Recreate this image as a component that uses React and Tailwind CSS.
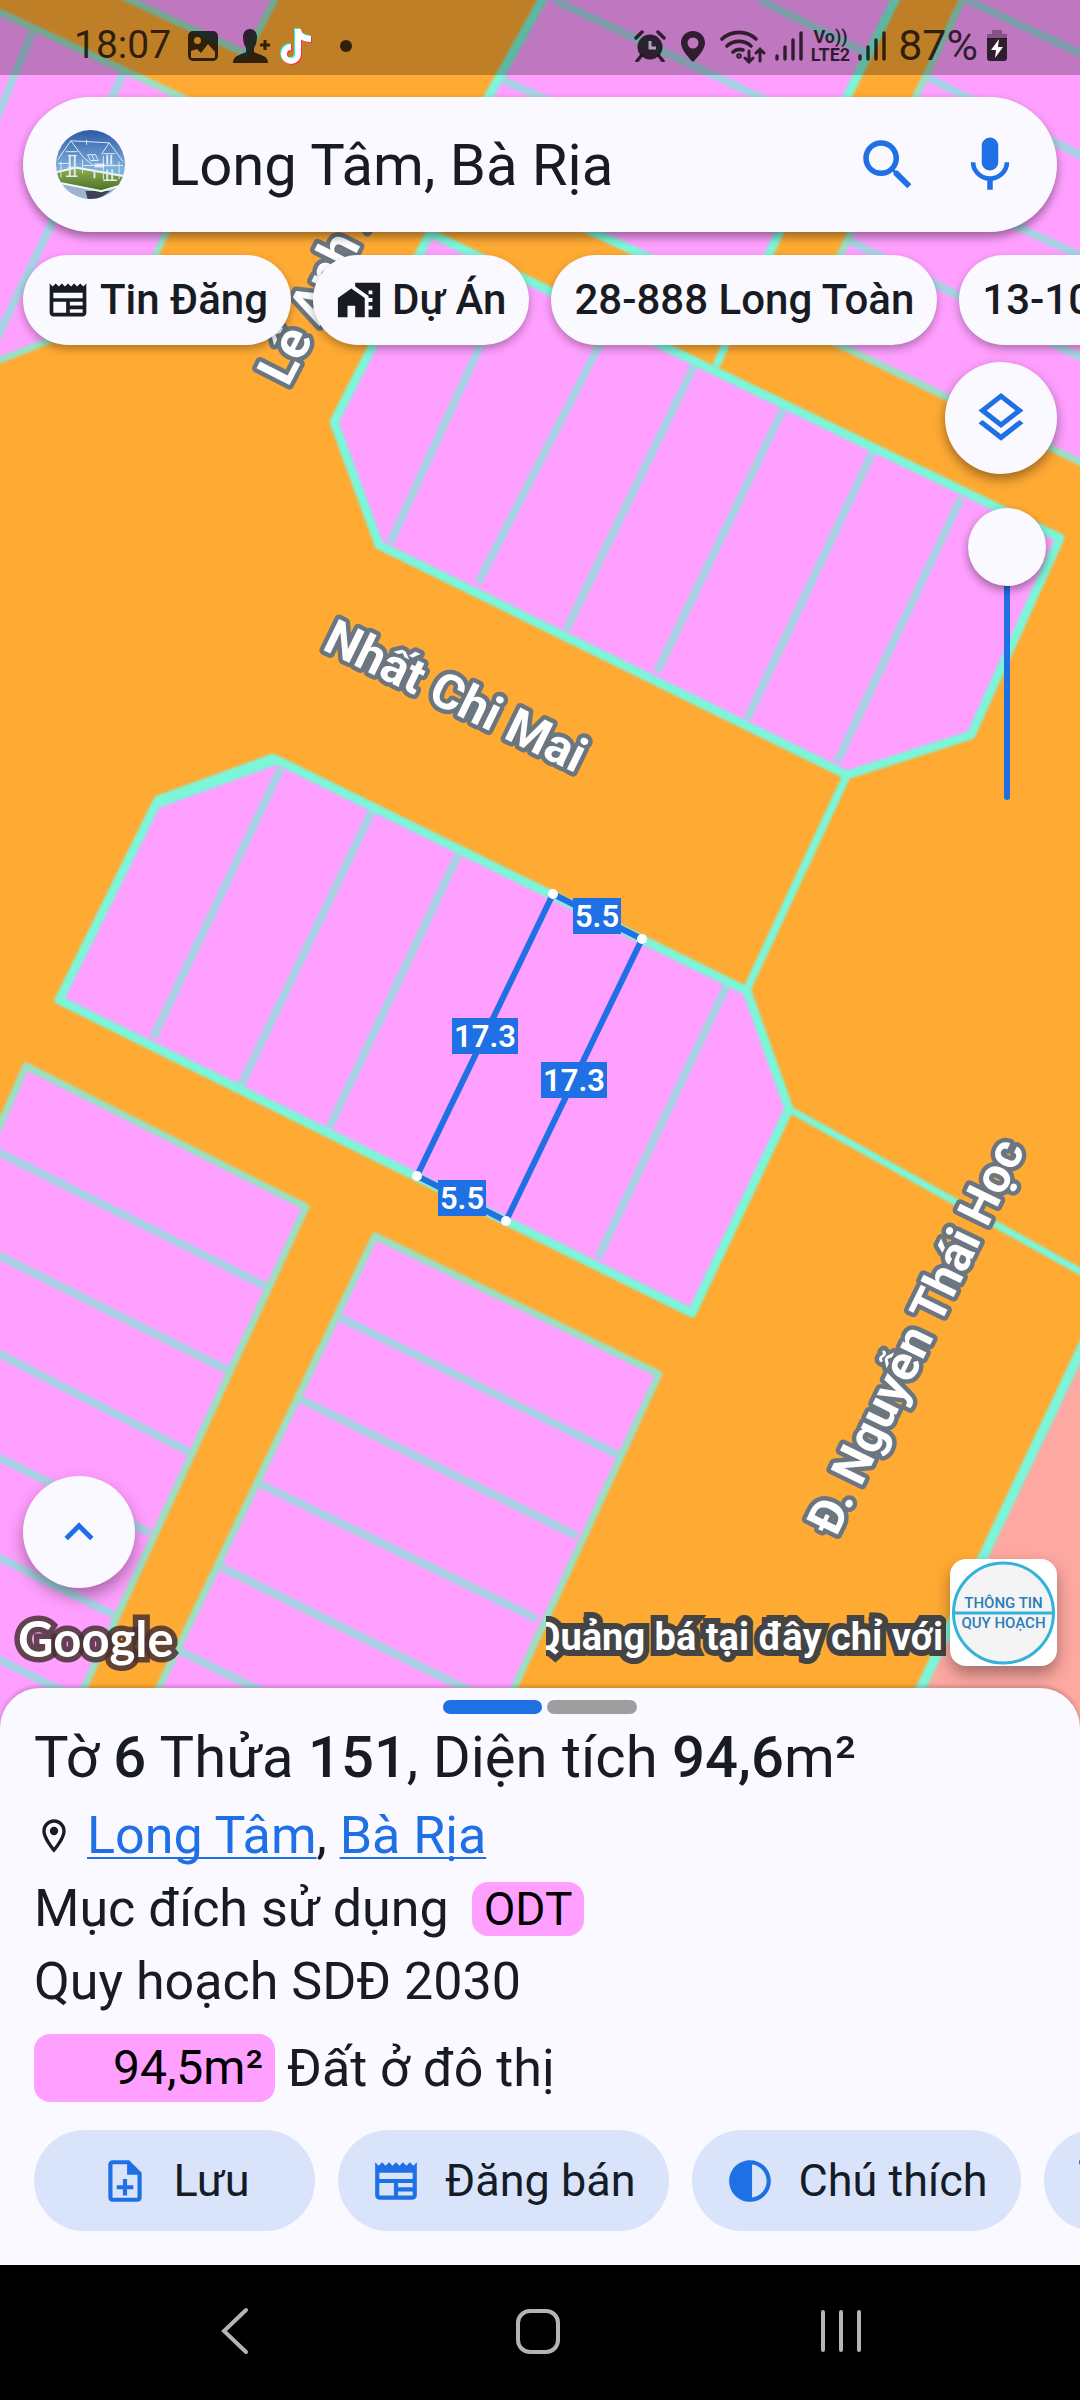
import React from "react";
import {
  MdSearch,
  MdMic,
  MdNewspaper,
  MdMapsHomeWork,
  MdOutlineLayers,
  MdKeyboardArrowUp,
  MdOutlineLocationOn,
  MdOutlineNoteAdd,
  MdContrast,
  MdOutlineShoppingCart,
} from "react-icons/md";

const LINE = "#7df5d8";
const SOFT = "#9be0c4";
const LOT = "#a6d3e4";

const blocks = [
  { points: "-20,3 222,116 130,308 -20,368", edge: SOFT },
  { points: "100,-14 246,54 282,-14", edge: SOFT },
  { points: "550,-14 450,166 745,302 900,-10", edge: LINE },
  { points: "968,-12 805,328 1100,472 1100,-12", edge: SOFT },
  { points: "430,233 1060,538 971,735 847,775 379,545 334,422", edge: LINE },
  { points: "275,759 157,802 59,1000 692,1313 789,1109 747,991", edge: LINE },
  { points: "26,1066 306,1207 60,1740 -20,1740 -20,1170", edge: SOFT },
  { points: "375,1236 659,1374 490,1740 134,1740", edge: SOFT },
];

const lots = [
  [34, 28, -10, 134], [124, 72, -4, 340],
  [503, 80, 560, 106], [554, 0, 800, 116], [760, 0, 864, 52],
  [967, 0, 1090, 58], [929, 78, 1090, 160], [882, 165, 1090, 260], [848, 240, 1090, 362],
  [390, 543, 513, 274], [478, 583, 611, 322], [566, 630, 694, 366],
  [657, 672, 785, 405], [747, 719, 873, 451], [837, 762, 961, 498],
  [281, 768, 153, 1038], [372, 811, 241, 1085], [458, 855, 329, 1128],
  [727, 985, 598, 1258],
  [-10, 1148, 267, 1287], [-10, 1251, 227, 1370], [-10, 1349, 189, 1452],
  [-10, 1453, 150, 1533], [-10, 1553, 114, 1615], [-10, 1655, 120, 1720],
  [339, 1317, 618, 1455], [300, 1399, 577, 1536], [258, 1483, 537, 1619],
  [217, 1565, 520, 1716], [178, 1650, 320, 1720],
];

const dimensions = [
  { x: 597, y: 916, w: 48, label: "5.5" },
  { x: 485, y: 1036, w: 66, label: "17.3" },
  { x: 574, y: 1080, w: 66, label: "17.3" },
  { x: 462, y: 1198, w: 48, label: "5.5" },
];

function StreetName({ x, y, angle, size = 49, children }) {
  return (
    <text
      transform={`translate(${x} ${y}) rotate(${angle})`}
      fontSize={size}
      fontWeight="700"
      fill="#fff"
      stroke="#6b7680"
      strokeWidth="9"
      strokeLinejoin="round"
      paintOrder="stroke"
    >
      {children}
    </text>
  );
}

function ParcelMap() {
  return (
    <svg
      className="absolute inset-0 h-full w-full"
      viewBox="0 0 1080 1728"
      preserveAspectRatio="xMidYMin slice"
      aria-label="Bản đồ quy hoạch"
    >
      <rect width="1080" height="1728" fill="#ffaa33" />
      <g className="blur-[1px]">
        <polygon points="1100,1310 902,1728 1100,1740" fill="#fda8a0" />
        {blocks.map((b) => (
          <polygon key={b.points} points={b.points} fill="#ff9fff" />
        ))}
        {lots.map((l) => (
          <line key={l.join()} x1={l[0]} y1={l[1]} x2={l[2]} y2={l[3]} stroke={LOT} strokeWidth="8" />
        ))}
        {blocks.map((b) => (
          <polygon
            key={b.points}
            points={b.points}
            fill="none"
            stroke={b.edge}
            strokeWidth={b.edge === LINE ? 9 : 7}
            strokeLinejoin="round"
          />
        ))}
        <g stroke={LINE} strokeWidth="8" fill="none">
          <path d="M745 302 716 366" />
          <path d="M847 775 747 989" />
          <path d="M789 1109 1090 1277" strokeWidth="7" />
          <path d="M1090 1331 902 1728" strokeWidth="10" />
          <path d="M157 802 275 759" strokeWidth="12" />
        </g>
      </g>

      <StreetName x={288} y={388} angle={-63} size={52}>Lê Anh Xuân</StreetName>
      <StreetName x={321} y={649} angle={26}>Nhất Chi Mai</StreetName>
      <StreetName x={836} y={1538} angle={-64}>Đ. Nguyễn Thái Học</StreetName>

      <polygon
        points="553,894 642,939 506,1221 417,1176"
        fill="none"
        stroke="#1f70e4"
        strokeWidth="6"
      />
      {[[553, 894], [642, 939], [506, 1221], [417, 1176]].map(([x, y]) => (
        <circle key={x} cx={x} cy={y} r="5" fill="#fff" />
      ))}
      {dimensions.map((d) => (
        <g key={`${d.x}-${d.y}`}>
          <rect x={d.x - d.w / 2} y={d.y - 18} width={d.w} height="36" fill="#1f70e4" />
          <text x={d.x} y={d.y + 11} textAnchor="middle" fontSize="31" fontWeight="600" fill="#fff">
            {d.label}
          </text>
        </g>
      ))}
    </svg>
  );
}

function SignalBars() {
  return (
    <svg className="h-[30px] w-[28px]" viewBox="0 0 28 30" stroke="currentColor" strokeWidth="3.4" strokeLinecap="round">
      <path d="M2 28v-3M10 28V16M18 28V9M26 28V2" />
    </svg>
  );
}

function StatusBar() {
  return (
    <div className="relative flex h-[75px] shrink-0 items-center justify-between bg-black/25 pt-4 pr-[72px] pl-[74px] text-[39px] leading-none text-black/75">
      <div className="flex items-center">
        <span>18:07</span>
        <svg className="ml-4 h-8 w-8" viewBox="0 0 32 32">
          <path
            fill="currentColor"
            fillRule="evenodd"
            d="M6 1h20a5 5 0 0 1 5 5v20a5 5 0 0 1-5 5H6a5 5 0 0 1-5-5V6a5 5 0 0 1 5-5Zm4.500 6a3.500 3.500 0 1 0 0 7 3.500 3.500 0 0 0 0-7ZM4 21v6a1 1 0 0 0 1 1h22a1 1 0 0 0 1-1v-5l-7-8-7 9-4-4Z"
          />
        </svg>
        <svg className="ml-[14px] h-[36px] w-[38px]" viewBox="0 0 38 36">
          <path
            fill="currentColor"
            d="M17 1c4 0 7 3 7 8 0 4-1 8-3 11v4c5 3 14 3 14 11H0c0-8 8-8 13-11v-4c-2-3-3-7-3-11 0-5 3-8 7-8Z"
          />
          <path d="M32 12v10M27 17h10" stroke="currentColor" strokeWidth="3" />
        </svg>
        <svg className="ml-2 h-[40px] w-[36px]" viewBox="0 0 36 40" fill="none" strokeWidth="6">
          <path d="M18 2v25a7 7 0 1 1-7-7M18 3c1 6 6 9 13 9" stroke="#25f4ee" />
          <path d="M20 4v25a7 7 0 1 1-7-7M20 5c1 6 6 9 13 9" stroke="#fe2c55" />
          <path d="M19 3v25a7 7 0 1 1-7-7M19 4c1 6 6 9 13 9" stroke="#fff" />
        </svg>
        <svg className="ml-[25px] h-3 w-3" viewBox="0 0 12 12">
          <circle cx="6" cy="6" r="6" fill="currentColor" />
        </svg>
      </div>
      <div className="flex items-center">
        <svg className="h-8 w-8" viewBox="0 0 32 32" fill="none" stroke="currentColor">
          <circle cx="16" cy="17" r="12.500" fill="currentColor" stroke="none" />
          <path d="M2 8 8 2M24 2l6 6M7 26l-4 5M25 26l4 5" strokeWidth="3.500" strokeLinecap="round" />
          <path d="M16 11v7h6" stroke="#b79ac0" strokeWidth="3" />
        </svg>
        <svg className="ml-[14px] h-[32px] w-[26px]" viewBox="0 0 26 32">
          <path
            fill="currentColor"
            fillRule="evenodd"
            d="M13 1c7 0 12 5 12 12 0 8-12 19-12 19S1 21 1 13C1 6 6 1 13 1Zm0 6.500a5.500 5.500 0 1 0 0 11 5.500 5.500 0 0 0 0-11Z"
          />
        </svg>
        <svg className="ml-[14px] h-[36px] w-[46px]" viewBox="0 0 46 36" fill="none" stroke="currentColor" strokeWidth="3.600" strokeLinecap="round">
          <path d="M2 11a25 25 0 0 1 34 0M7 18a18 18 0 0 1 24 0M13 24a10 10 0 0 1 10-2" />
          <circle cx="19" cy="28" r="1" />
          <path d="M29 23v11M25 30l4 4 4-4M40 33V21M36 25l4-4 4 4" strokeWidth="3" />
        </svg>
        <div className="ml-[9px]"><SignalBars /></div>
        <div className="ml-2 flex flex-col items-center text-[18px] leading-[18px] font-bold">
          <span>Vo))</span>
          <span>LTE2</span>
        </div>
        <div className="ml-2"><SignalBars /></div>
        <span className="ml-[12px] text-[43px]">87%</span>
        <svg className="ml-2 h-8 w-[22px]" viewBox="0 0 22 32">
          <path d="M6 0h10v4h5v5H1V4h5Z" fill="currentColor" opacity=".4" />
          <path d="M1 8h20v20a3 3 0 0 1-3 3H4a3 3 0 0 1-3-3Z" fill="currentColor" />
          <path d="M13 9 5 20h5l-1 8 8-11h-5Z" fill="#fff" />
        </svg>
      </div>
    </div>
  );
}

function Avatar() {
  return (
    <svg className="h-[69px] w-[69px] shrink-0 rounded-full" viewBox="0 0 70 70">
      <defs>
        <linearGradient id="sky" x1="0" y1="0" x2="0" y2="1">
          <stop offset="0" stopColor="#2c5aa8" />
          <stop offset=".55" stopColor="#7fb0da" />
        </linearGradient>
        <linearGradient id="grass" x1="0" y1="0" x2="0" y2="1">
          <stop offset="0" stopColor="#8fae4c" />
          <stop offset="1" stopColor="#4f7328" />
        </linearGradient>
      </defs>
      <rect width="70" height="70" fill="url(#sky)" />
      <path d="M0 56 42 62 70 55v15H0Z" fill="#9fb3cf" />
      <path d="M30 62h25l-12 8H32Z" fill="#3c4254" />
      <path d="M0 43 20 39 70 48v7L46 61 0 52Z" fill="url(#grass)" />
      <path d="M0 43 20 38 70 47M0 53 46 62 70 55" fill="none" stroke="#f4f8f4" strokeWidth="2" />
      <g fill="none" stroke="#dcebf8" strokeWidth="1">
        <path d="M2 30 15 11 28 28 38 36M15 11 54 13M46 25 54 13 68 32M10 22h12M48 24h12M5 32v16M27 30v14M48 26v24M64 32v18M28 36h40M2 34h12M32 25h8l3 6h-8ZM36 25l3 6M31 10v5" />
        <path d="M14 25v22M19 25v22M52 25v10M56 25v10M39 40v9M52 40v11M57 40v11" strokeWidth="2" />
        <path d="M12 26h9M12 38h9M10 47h12M50 36h10M48 51h14" strokeWidth="1.500" />
      </g>
      <path d="M39 34h10v4H39Z" fill="#fff" opacity=".7" />
    </svg>
  );
}

const chipClass =
  "flex h-full shrink-0 items-center gap-[10px] rounded-full bg-[#faf9ff] px-[23px] text-[42px] leading-none font-medium whitespace-nowrap shadow-[0_4px_8px_rgba(0,0,0,0.3)]";
const actionClass =
  "flex h-full shrink-0 items-center justify-center gap-[24px] rounded-full bg-[#d9e4fb] px-[33px] text-[45px] leading-none whitespace-nowrap text-[#141c28]";
const outlineText = "text-white [paint-order:stroke_fill]";

function MapPanel() {
  return (
    <main className="relative flex min-h-[1100px] flex-1 flex-col overflow-hidden">
      <ParcelMap />
      <StatusBar />

      <form
        className="relative mx-[23px] mt-[22px] flex h-[135px] shrink-0 items-center rounded-full bg-[#faf9ff] pr-[34px] pl-[33px] shadow-[0_5px_10px_rgba(0,0,0,0.4)]"
        onSubmit={(e) => e.preventDefault()}
      >
        <Avatar />
        <input
          className="ml-[43px] min-w-0 flex-1 bg-transparent text-[58px] leading-none outline-none"
          type="text"
          aria-label="Tìm kiếm"
          defaultValue="Long Tâm, Bà Rịa"
        />
        <button type="submit" aria-label="Tìm" className="text-[#1f70e4]">
          <MdSearch size={66} />
        </button>
        <button type="button" aria-label="Tìm bằng giọng nói" className="ml-[36px] text-[#1f70e4]">
          <MdMic size={66} />
        </button>
      </form>

      <div className="relative mt-[23px] flex h-[90px] shrink-0 gap-[22px] pl-[23px]">
        <button type="button" className={chipClass}><MdNewspaper size={44} />Tin Đăng</button>
        <button type="button" className={chipClass}><MdMapsHomeWork size={46} />Dự Án</button>
        <button type="button" className={chipClass}>28-888 Long Toàn</button>
        <button type="button" className={chipClass}>13-100 Long Toàn</button>
      </div>

      <div className="relative mt-[17px] mr-[23px] flex flex-col items-end self-end">
        <button
          type="button"
          aria-label="Lớp bản đồ"
          className="flex size-[112px] items-center justify-center rounded-full bg-[#faf9ff] text-[#1f70e4] shadow-[0_5px_12px_rgba(0,0,0,0.4)]"
        >
          <MdOutlineLayers size={60} />
        </button>
        <input
          type="range"
          aria-label="Độ mờ lớp quy hoạch"
          defaultValue="0"
          className="mt-[34px] mr-[11px] h-[292px] w-[78px] appearance-none bg-transparent [writing-mode:vertical-lr] [&::-webkit-slider-runnable-track]:w-[6px] [&::-webkit-slider-runnable-track]:rounded-full [&::-webkit-slider-runnable-track]:bg-[#1f70e4] [&::-webkit-slider-thumb]:ml-[-36px] [&::-webkit-slider-thumb]:size-[78px] [&::-webkit-slider-thumb]:appearance-none [&::-webkit-slider-thumb]:rounded-full [&::-webkit-slider-thumb]:bg-[#faf9ff] [&::-webkit-slider-thumb]:shadow-[0_4px_10px_rgba(0,0,0,0.4)]"
        />
      </div>

      <div className="relative mt-auto flex items-end justify-between pr-[23px] pb-[60px] pl-[18px]">
        <div className="flex flex-col">
          <button
            type="button"
            aria-label="Mở rộng"
            className="ml-[5px] flex size-[112px] items-center justify-center rounded-full bg-[#faf9ff] text-[#1f70e4] shadow-[0_8px_16px_rgba(0,0,0,0.35)]"
          >
            <MdKeyboardArrowUp size={58} />
          </button>
          <span className={`${outlineText} mt-5 font-[Lato] text-[49px] leading-[60px] font-bold [-webkit-text-stroke:11px_rgb(70_48_50/0.85)]`}>
            Google
          </span>
        </div>
        <div className="flex items-end gap-1">
          <div className="flex w-[400px] justify-end overflow-hidden pr-[3px] pb-[3px]">
            <span className={`${outlineText} shrink-0 text-[38px] leading-[56px] font-bold whitespace-nowrap [-webkit-text-stroke:12px_#444]`}>
              Quảng bá tại đây chỉ với
            </span>
          </div>
          <svg className="mb-[2px] size-[107px] rounded-[16px] bg-white shadow-[0_8px_16px_rgba(0,0,0,0.35)]" viewBox="0 0 107 107">
            <circle cx="53.500" cy="54" r="50" fill="#f4f4f4" stroke="#34b2da" strokeWidth="3" />
            <path d="M4 54h99" stroke="#34b2da" strokeWidth="3" />
            <g fontSize="15" fontWeight="500" fill="#2b7db8" textAnchor="middle">
              <text x="53.500" y="49">THÔNG TIN</text>
              <text x="53.500" y="69">QUY HOẠCH</text>
            </g>
          </svg>
        </div>
      </div>
    </main>
  );
}

function ParcelSheet() {
  return (
    <section className="relative -mt-10 flex flex-col overflow-hidden rounded-t-[40px] bg-[#faf9ff] pt-3 pb-[34px] pl-[34px] shadow-[0_-2px_4px_rgba(0,0,0,0.2)]">
      <div className="flex justify-center gap-[5px] pr-[34px]">
        <span className="h-[14px] w-[99px] rounded-full bg-[#1f70e4]" />
        <span className="h-[14px] w-[90px] rounded-full bg-[#9e9e9e]" />
      </div>
      <h1 className="mt-[11px] text-[58px] leading-[64px] whitespace-nowrap">
        Tờ <b className="font-medium">6</b> Thửa <b className="font-medium">151</b>, Diện tích{" "}
        <b className="font-medium">94,6</b>m²
      </h1>
      <div className="mt-[10px] flex flex-col text-[52px] leading-[73px] whitespace-nowrap">
        <p className="flex items-center">
          <MdOutlineLocationOn size={40} className="mr-[13px]" />
          <span>
            <a href="#long-tam" className="text-[#1f70e4] underline decoration-2 underline-offset-4 [text-decoration-skip-ink:none]">Long Tâm</a>,{" "}
            <a href="#ba-ria" className="text-[#1f70e4] underline decoration-2 underline-offset-4 [text-decoration-skip-ink:none]">Bà Rịa</a>
          </span>
        </p>
        <p className="flex items-center">
          Mục đích sử dụng
          <span className="ml-[23px] rounded-[16px] bg-[#ff9fff] px-3 text-[46px] leading-[54px] text-black">ODT</span>
        </p>
        <p>Quy hoạch SDĐ 2030</p>
        <p className="mt-4 flex h-[68px] items-center">
          <span className="mr-3 w-[241px] rounded-[16px] bg-[#ff9fff] pr-3 text-right text-[48px] leading-[68px] text-black">94,5m²</span>
          Đất ở đô thị
        </p>
      </div>
      <div className="mt-7 flex h-[101px] gap-[23px]">
        <button type="button" className={`${actionClass} min-w-[281px]`}>
          <MdOutlineNoteAdd size={50} className="text-[#1f70e4]" />Lưu
        </button>
        <button type="button" className={actionClass}>
          <MdNewspaper size={50} className="text-[#1f70e4]" />Đăng bán
        </button>
        <button type="button" className={actionClass}>
          <MdContrast size={50} className="text-[#1f70e4]" />Chú thích
        </button>
        <button type="button" className={actionClass} aria-label="Mua">
          <MdOutlineShoppingCart size={50} className="text-[#1f70e4]" />
        </button>
      </div>
    </section>
  );
}

function NavBar() {
  return (
    <nav className="flex h-[135px] shrink-0 items-center justify-around bg-black pr-[88px] pb-[3px] pl-[83px] text-[#b4b4b4]">
      <button type="button" aria-label="Quay lại">
        <svg className="h-[50px] w-[50px]" viewBox="0 0 50 50" fill="none" stroke="currentColor" strokeWidth="4" strokeLinecap="round">
          <path d="M36 4 14 25l22 21" />
        </svg>
      </button>
      <button type="button" aria-label="Màn hình chính">
        <svg className="h-[50px] w-[50px]" viewBox="0 0 50 50" fill="none" stroke="currentColor" strokeWidth="4">
          <rect x="5" y="5" width="40" height="41" rx="12" />
        </svg>
      </button>
      <button type="button" aria-label="Ứng dụng gần đây">
        <svg className="h-[50px] w-[50px]" viewBox="0 0 50 50" stroke="currentColor" strokeWidth="4" strokeLinecap="round">
          <path d="M7 6v38M25 6v38M43 6v38" />
        </svg>
      </button>
    </nav>
  );
}

export default function App() {
  return (
    <div className="flex min-h-screen flex-col overflow-hidden bg-black font-[Roboto,sans-serif] text-[#191b23]">
      <MapPanel />
      <ParcelSheet />
      <NavBar />
    </div>
  );
}
